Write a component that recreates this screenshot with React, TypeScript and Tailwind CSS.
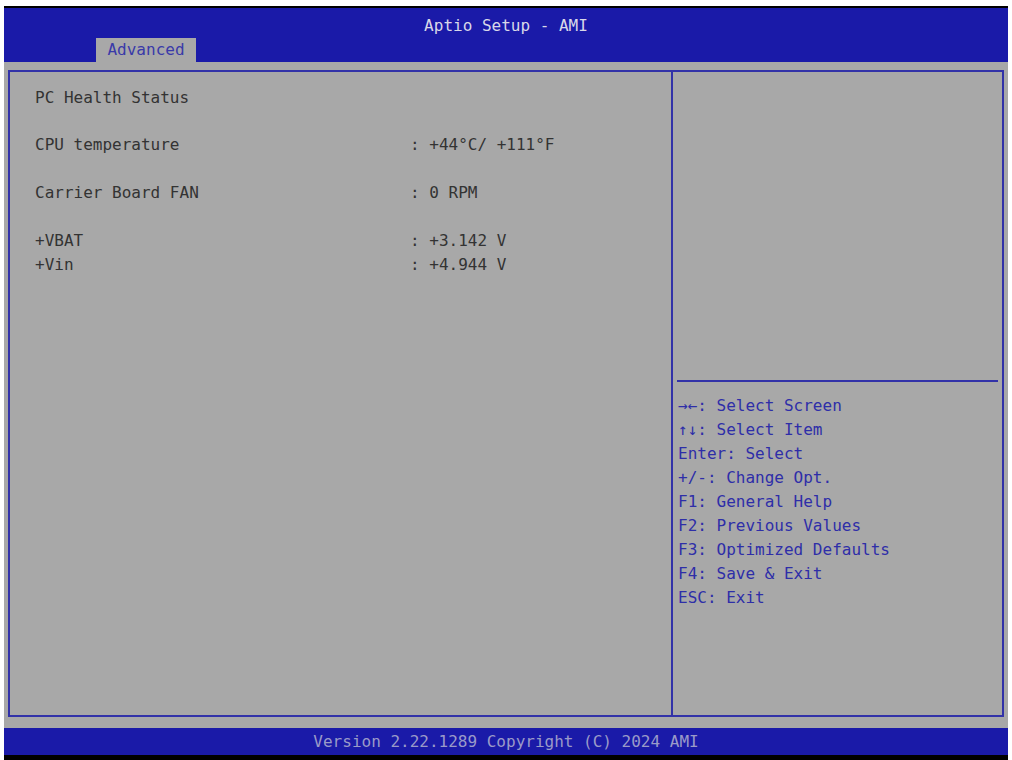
export default function App() {
  const rows: [string, string, string][] = [
    ['CPU temperature', ': +44°C/ +111°F', 'mt-[23px]'],
    ['Carrier Board FAN', ': 0 RPM', 'mt-[24px]'],
    ['+VBAT', ': +3.142 V', 'mt-[24px]'],
    ['+Vin', ': +4.944 V', 'mt-0'],
  ];
  const help = [
    ['→←', ': Select Screen'],
    ['↑↓', ': Select Item'],
    ['Enter', ': Select'],
    ['+/-', ': Change Opt.'],
    ['F1', ': General Help'],
    ['F2', ': Previous Values'],
    ['F3', ': Optimized Defaults'],
    ['F4', ': Save & Exit'],
    ['ESC', ': Exit'],
  ];
  return (
    <div className="w-[1012px] h-[760px] bg-white pt-[6px] px-[4px] font-[DejaVu_Sans_Mono] text-[16px]">
      <div className="h-[754px] bg-black flex flex-col pt-[2px]">
        <div className="h-[54px] bg-[#1a1aa8] relative flex flex-col">
          <div className="text-center text-[#d8d8e8] pt-[8px] leading-[20px]">Aptio Setup - AMI</div>
          <div className="mt-auto ml-[92px] w-[100px] h-[24px] bg-[#a8a8a8] text-[#3a3aa8] text-center leading-[24px]">Advanced</div>
        </div>
        <div className="h-[666px] bg-[#a8a8a8] px-[4px] pt-[8px] pb-[11px] flex">
          <div className="flex-1 flex border-2 border-[#3232a8]">
            <div className="w-[663px] border-r-2 border-[#3232a8] pl-[25px] pt-[14px] text-[#333]">
              <div className="leading-[24px]">PC Health Status</div>
              {rows.map(([l, v, m]) => (
                <div key={l} className={`flex leading-[24px] ${m}`}>
                  <span className="w-[375px]">{l}</span>
                  <span>{v}</span>
                </div>
              ))}
            </div>
            <div className="flex-1 flex flex-col px-[2px]">
              <div className="h-[310px] border-b-2 border-[#3232a8] mx-[2px]" />
              <div className="pt-[12px] pl-[3px] text-[#2e2ea8] leading-[24px]">
                {help.map(([k, d]) => (
                  <div key={k}>{k}{d}</div>
                ))}
              </div>
            </div>
          </div>
        </div>
        <div className="h-[27px] bg-[#1a1aa8] text-center text-[#9a9ac8] leading-[27px]">Version 2.22.1289 Copyright (C) 2024 AMI</div>
      </div>
    </div>
  );
}
